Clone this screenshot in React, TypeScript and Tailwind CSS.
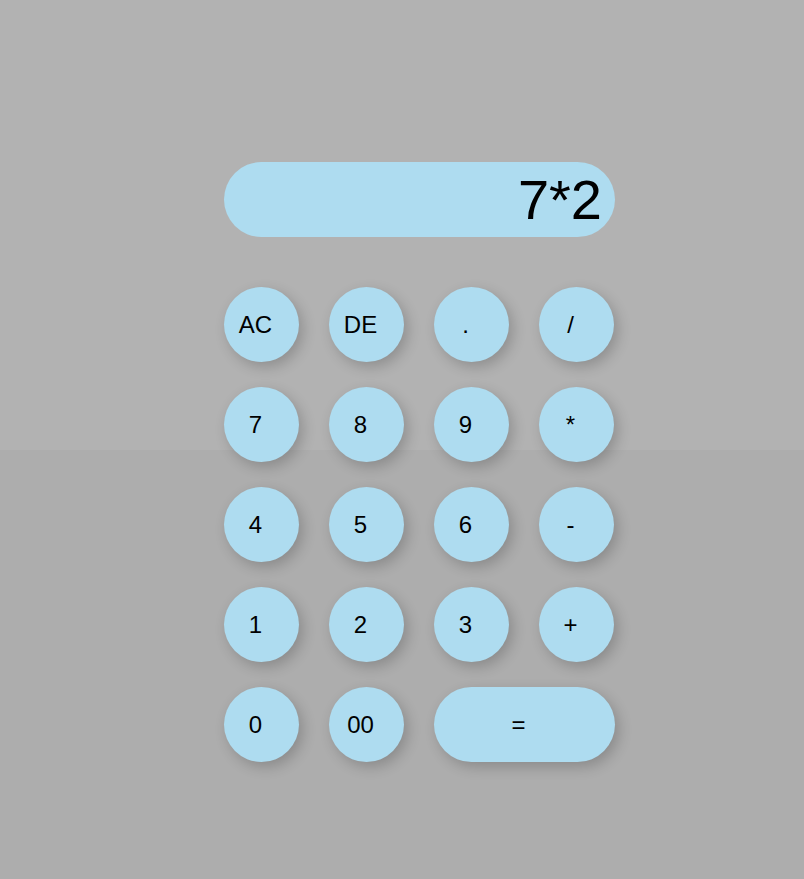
const keys: { label: string; wide?: boolean }[] = [
  { label: 'AC' },
  { label: 'DE' },
  { label: '.' },
  { label: '/' },
  { label: '7' },
  { label: '8' },
  { label: '9' },
  { label: '*' },
  { label: '4' },
  { label: '5' },
  { label: '6' },
  { label: '-' },
  { label: '1' },
  { label: '2' },
  { label: '3' },
  { label: '+' },
  { label: '0' },
  { label: '00' },
  { label: '=', wide: true },
]

export default function App() {
  return (
    <div
      className="min-h-[879px] w-full bg-[linear-gradient(#b2b2b2_450px,#adadad_450px)] pt-[162px] pl-[224px]"
      style={{ fontFamily: '"Liberation Sans", Arial, sans-serif' }}
    >
      <div className="w-[391px]">
        <div className="flex h-[75px] items-center justify-end rounded-full bg-[#aedcf0] pr-[13px] text-[56px] leading-none text-black">
          7*2
        </div>

        <div className="mt-[50px] grid grid-cols-[repeat(4,75px)] gap-x-[30px] gap-y-[25px]">
          {keys.map((k) => (
            <button
              key={k.label}
              className={`flex h-[75px] items-center justify-center rounded-full bg-[#aedcf0] pr-3 text-[24px] text-black shadow-[4px_5px_14px_rgba(0,0,0,0.2)] ${
                k.wide ? 'col-span-2 w-[181px]' : 'w-[75px]'
              }`}
            >
              {k.label}
            </button>
          ))}
        </div>
      </div>
    </div>
  )
}
